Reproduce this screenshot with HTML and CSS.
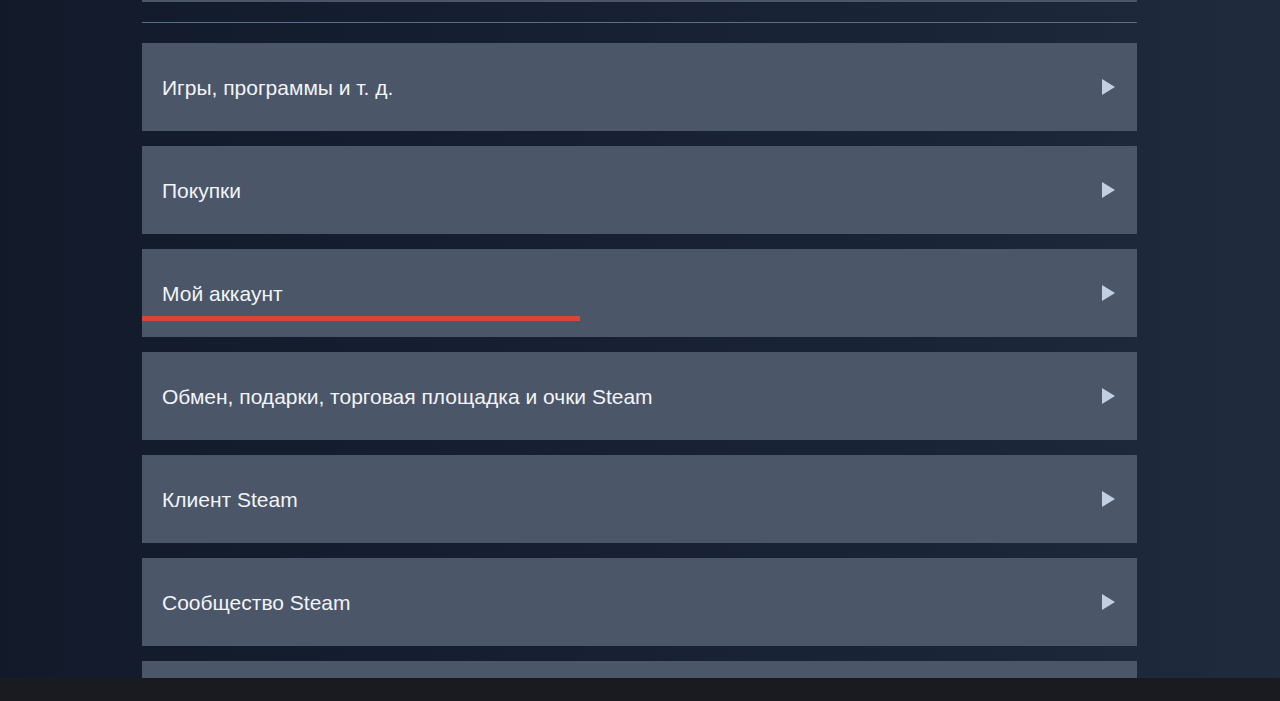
FILE: index.html
```html
<!DOCTYPE html>
<html lang="ru">
<head>
<meta charset="utf-8">
<title>Steam Support</title>
<link rel="stylesheet" href="styles.css">
</head>
<body>
<div class="page">
  <div class="list">
    <div class="card card-prev"></div>
    <div class="divider"></div>
    <div class="cards">
      <div class="card"><span class="label">Игры, программы и т. д.</span><span class="arrow"></span></div>
      <div class="card"><span class="label">Покупки</span><span class="arrow"></span></div>
      <div class="card card-marked"><span class="label">Мой аккаунт</span><span class="arrow"></span><span class="mark"></span></div>
      <div class="card"><span class="label">Обмен, подарки, торговая площадка и очки Steam</span><span class="arrow"></span></div>
      <div class="card"><span class="label">Клиент Steam</span><span class="arrow"></span></div>
      <div class="card"><span class="label">Сообщество Steam</span><span class="arrow"></span></div>
      <div class="card card-cut"></div>
    </div>
  </div>
</div>
<div class="bottombar"></div>
</body>
</html>
```
FILE: styles.css
```css
html, body {
  margin: 0;
  padding: 0;
  height: 100%;
  overflow: hidden;
}
body {
  background: linear-gradient(90deg, #121a2a 0%, #151e30 30%, #1a2437 70%, #1f2a3d 100%);
  font-family: "Liberation Sans", Arial, Helvetica, sans-serif;
}
.page {
  padding-left: 142px;
}
.list {
  width: 995px;
}
.card {
  position: relative;
  height: 88px;
  background: #4b5669;
  display: flex;
  align-items: center;
  justify-content: space-between;
  padding: 0 22px 0 20px;
  box-sizing: border-box;
}
.card-prev {
  margin-top: -86px;
}
.divider {
  height: 1px;
  background: #58708f;
  margin-top: 20px;
}
.cards {
  margin-top: 20px;
  display: flex;
  flex-direction: column;
  gap: 15px;
}
.label {
  color: #f2f4f7;
  font-size: 21px;
  padding-top: 2px;
}
.arrow {
  width: 0;
  height: 0;
  border-top: 8.5px solid transparent;
  border-bottom: 8.5px solid transparent;
  border-left: 13px solid #c2cfe2;
}
.mark {
  position: absolute;
  left: 0;
  top: 67px;
  width: 438px;
  height: 5px;
  background: #d8453a;
}
.bottombar {
  position: fixed;
  left: 0;
  right: 0;
  bottom: 0;
  height: 23px;
  background: #191b21;
}
```
